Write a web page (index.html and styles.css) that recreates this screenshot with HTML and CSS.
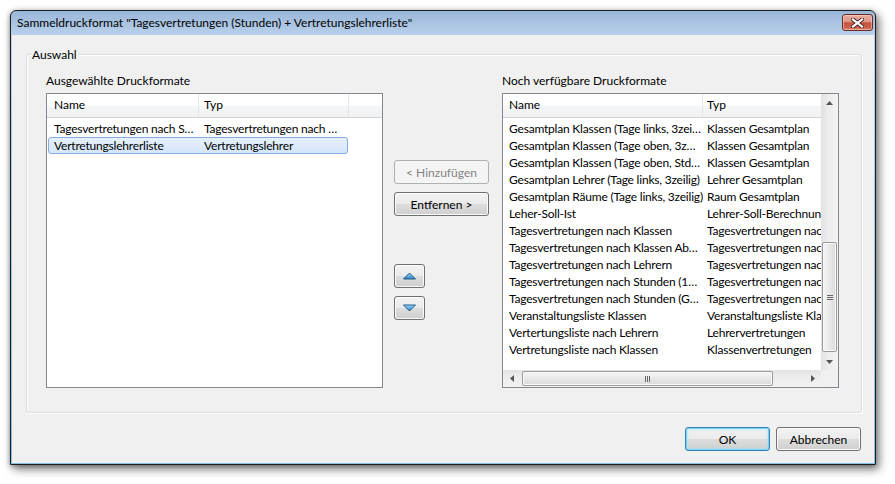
FILE: index.html
```html
<!DOCTYPE html>
<html>
<head>
<meta charset="utf-8">
<title>Sammeldruckformat</title>
<link rel="stylesheet" href="styles.css">
</head>
<body>
<div class="window">
  <div class="titlebar">
    <span class="title">Sammeldruckformat "Tagesvertretungen (Stunden) + Vertretungslehrerliste"</span>
    <div class="close">
      <svg width="13" height="10" viewBox="0 0 13 10">
        <path d="M2 1.5 L11 8.5 M11 1.5 L2 8.5" stroke="#4a2420" stroke-width="4" stroke-linecap="square" fill="none"/>
        <path d="M2 1.5 L11 8.5 M11 1.5 L2 8.5" stroke="#ffffff" stroke-width="2.2" stroke-linecap="square" fill="none"/>
      </svg>
    </div>
  </div>
  <div class="client">
    <div class="group">
      <span class="legend">Auswahl</span>
      <div class="col">
        <div class="label">Ausgewählte Druckformate</div>
        <div class="list llist">
          <div class="header">
            <div class="hcell lc1">Name</div>
            <div class="hcell lc2">Typ</div>
            <div class="hcell hrest"></div>
          </div>
          <div class="rows">
            <div class="row"><span class="cell lr1">Tagesvertretungen nach S…</span><span class="cell lr2">Tagesvertretungen nach …</span></div>
            <div class="row sel"><span class="cell lr1">Vertretungslehrerliste</span><span class="cell lr2">Vertretungslehrer</span></div>
          </div>
        </div>
      </div>
      <div class="mid">
        <button class="btn wide" disabled>&lt; Hinzufügen</button>
        <button class="btn wide gap8">Entfernen &gt;</button>
        <button class="btn small gap48">
          <svg width="13" height="8" viewBox="0 0 13 8"><defs><linearGradient id="gu" x1="0" y1="0" x2="0" y2="1"><stop offset="0" stop-color="#9fd6f7"/><stop offset="1" stop-color="#2d7fc6"/></linearGradient></defs><polygon points="0.5,7 6.5,1 12.5,7" fill="url(#gu)" stroke="#1d5a8c" stroke-width="1" stroke-linejoin="round"/></svg>
        </button>
        <button class="btn small gap8">
          <svg width="13" height="8" viewBox="0 0 13 8"><defs><linearGradient id="gd" x1="0" y1="0" x2="0" y2="1"><stop offset="0" stop-color="#9fd6f7"/><stop offset="1" stop-color="#2d7fc6"/></linearGradient></defs><polygon points="0.5,1 6.5,7 12.5,1" fill="url(#gd)" stroke="#1d5a8c" stroke-width="1" stroke-linejoin="round"/></svg>
        </button>
      </div>
      <div class="col">
        <div class="label">Noch verfügbare Druckformate</div>
        <div class="list rlist">
          <div class="content">
            <div class="header">
              <div class="hcell rc1">Name</div>
              <div class="hcell rc2">Typ</div>
            </div>
            <div class="rows">
              <div class="row"><span class="cell rr1">Gesamtplan Klassen (Tage links, 3zei…</span><span class="cell rr2">Klassen Gesamtplan</span></div>
              <div class="row"><span class="cell rr1">Gesamtplan Klassen (Tage oben, 3z…</span><span class="cell rr2">Klassen Gesamtplan</span></div>
              <div class="row"><span class="cell rr1">Gesamtplan Klassen (Tage oben, Std…</span><span class="cell rr2">Klassen Gesamtplan</span></div>
              <div class="row"><span class="cell rr1">Gesamtplan Lehrer (Tage links, 3zeilig)</span><span class="cell rr2">Lehrer Gesamtplan</span></div>
              <div class="row"><span class="cell rr1">Gesamtplan Räume (Tage links, 3zeilig)</span><span class="cell rr2">Raum Gesamtplan</span></div>
              <div class="row"><span class="cell rr1">Leher-Soll-Ist</span><span class="cell rr2">Lehrer-Soll-Berechnung</span></div>
              <div class="row"><span class="cell rr1">Tagesvertretungen nach Klassen</span><span class="cell rr2">Tagesvertretungen nach Klassen</span></div>
              <div class="row"><span class="cell rr1">Tagesvertretungen nach Klassen Ab…</span><span class="cell rr2">Tagesvertretungen nach Klassen</span></div>
              <div class="row"><span class="cell rr1">Tagesvertretungen nach Lehrern</span><span class="cell rr2">Tagesvertretungen nach Lehrern</span></div>
              <div class="row"><span class="cell rr1">Tagesvertretungen nach Stunden (1…</span><span class="cell rr2">Tagesvertretungen nach Stunden</span></div>
              <div class="row"><span class="cell rr1">Tagesvertretungen nach Stunden (G…</span><span class="cell rr2">Tagesvertretungen nach Stunden</span></div>
              <div class="row"><span class="cell rr1">Veranstaltungsliste Klassen</span><span class="cell rr2">Veranstaltungsliste Klassen</span></div>
              <div class="row"><span class="cell rr1">Vertertungsliste nach Lehrern</span><span class="cell rr2">Lehrervertretungen</span></div>
              <div class="row"><span class="cell rr1">Vertretungsliste nach Klassen</span><span class="cell rr2">Klassenvertretungen</span></div>
            </div>
          </div>
          <div class="vscroll">
            <div class="sbtn"><svg width="7" height="4" viewBox="0 0 7 4"><polygon points="0,4 3.5,0 7,4" fill="#555"/></svg></div>
            <div class="vtrack"><div class="vthumb"><span class="vgrip"></span></div></div>
            <div class="sbtn"><svg width="7" height="4" viewBox="0 0 7 4"><polygon points="0,0 3.5,4 7,0" fill="#555"/></svg></div>
          </div>
          <div class="hscroll">
            <div class="sbtn"><svg width="4" height="7" viewBox="0 0 4 7"><polygon points="4,0 0,3.5 4,7" fill="#555"/></svg></div>
            <div class="htrack"><div class="hthumb"><span class="hgrip"></span></div></div>
            <div class="sbtn"><svg width="4" height="7" viewBox="0 0 4 7"><polygon points="0,0 4,3.5 0,7" fill="#555"/></svg></div>
          </div>
          <div class="corner"></div>
        </div>
      </div>
    </div>
    <div class="footer">
      <button class="btn foot ok">OK</button>
      <button class="btn foot">Abbrechen</button>
    </div>
  </div>
</div>
</body>
</html>
```

FILE: styles.css
```css
* { box-sizing: border-box; }
html, body { margin: 0; padding: 0; background: #ffffff; }
body {
  font-family: "Segoe UI", Lato, "Liberation Sans", sans-serif;
  font-size: 12px;
  color: #000;
  width: 895px;
  height: 484px;
  overflow: hidden;
}

.window {
  margin: 10px 0 0 10px;
  width: 866px;
  height: 455px;
  border: 1px solid #1e1e1e;
  border-radius: 6px 6px 0 0;
  background: linear-gradient(to bottom, #9ab6d8 0px, #b8d0ea 24px, #7cc3e6 100%);
  box-shadow: 3px 4px 10px rgba(0,0,0,0.55), -1px 1px 4px rgba(0,0,0,0.25);
  display: flex;
  flex-direction: column;
}

.titlebar {
  flex: none;
  height: 24px;
  display: flex;
  align-items: flex-start;
  justify-content: space-between;
  padding: 0 2px 0 6px;
}
.title { margin-top: 4px; line-height: 15px; white-space: nowrap; }

.close {
  width: 31px;
  height: 17px;
  margin-top: 3px;
  border: 1px solid #6b2a22;
  border-radius: 3px;
  background: linear-gradient(to bottom, #eab0a2 0%, #dc9483 45%, #c7513c 52%, #c9644f 85%, #d98a76 100%);
  box-shadow: inset 0 0 0 1px rgba(255,220,210,0.5);
  display: flex;
  align-items: center;
  justify-content: center;
}

.client {
  flex: 1;
  margin: 0 1px 1px 1px;
  background: #f0f0f0;
  display: flex;
  flex-direction: column;
}

.group {
  position: relative;
  margin: 19px 0 0 14px;
  width: 836px;
  height: 359px;
  border: 1px solid #d5dfe5;
  border-radius: 3px;
  box-shadow: inset 1px 1px 0 #ffffff, 1px 1px 0 #ffffff;
  padding: 18px 22px 0 19px;
  display: flex;
  align-items: flex-start;
}
.legend {
  position: absolute;
  top: -8px;
  left: 4px;
  padding: 0 1px;
  line-height: 15px;
  background: #f0f0f0;
}

.col { width: 337px; display: flex; flex-direction: column; }
.label { line-height: 15px; margin-bottom: 5px; white-space: nowrap; }

.list {
  height: 295px;
  border: 1px solid #828790;
  background: #ffffff;
  overflow: hidden;
}

.header {
  height: 24px;
  display: flex;
  border-bottom: 1px solid #d5d5d5;
  background: linear-gradient(to bottom, #ffffff 0%, #ffffff 45%, #f4f5f7 55%, #f1f2f4 100%);
}
.hcell {
  flex: none;
  line-height: 22px;
  border-right: 1px solid #e3e5e8;
  white-space: nowrap;
  overflow: hidden;
}
.hrest { flex: 1; border-right: none; }
.lc1 { width: 152px; padding-left: 7px; }
.lc2 { width: 150px; padding-left: 5px; }
.rc1 { width: 200px; padding-left: 6px; }
.rc2 { width: 160px; padding-left: 4px; }

.rows { padding-top: 2px; }
.row {
  display: flex;
  height: 17px;
  margin-left: 1px;
  border: 1px solid transparent;
  border-radius: 3px;
  white-space: nowrap;
}
.llist .row { width: 300px; }
.row.sel {
  border-color: #84acdd;
  background: linear-gradient(to bottom, #e6f0fc 0%, #d5e6fb 100%);
}
.cell { flex: none; line-height: 15px; overflow: hidden; white-space: nowrap; letter-spacing: -0.2px; }
.lr1 { width: 150px; padding-left: 5px; }
.lr2 { width: 148px; padding-left: 5px; }
.rr1 { width: 198px; padding-left: 4px; }
.rr2 { width: 160px; padding-left: 4px; }

.mid {
  flex: none;
  width: 95px;
  margin: 0 13px 0 11px;
  padding-top: 87px;
  display: flex;
  flex-direction: column;
  align-items: flex-start;
}
.btn {
  height: 24px;
  padding: 0;
  font: inherit;
  color: #000;
  border: 1px solid #707070;
  border-radius: 3px;
  background: linear-gradient(to bottom, #f2f2f2 0%, #ebebeb 48%, #dddddd 52%, #cfcfcf 100%);
  box-shadow: inset 0 0 0 1px #fbfbfb;
  display: flex;
  align-items: center;
  justify-content: center;
}
.btn:disabled {
  border-color: #adb2b5;
  background: #f4f4f4;
  color: #838383;
  box-shadow: none;
}
.wide { width: 95px; }
.small { width: 31px; }
.gap8 { margin-top: 8px; }
.gap48 { margin-top: 48px; }

.rlist {
  display: grid;
  grid-template-columns: 318px 17px;
  grid-template-rows: 276px 17px;
}
.content { overflow: hidden; }

.vscroll {
  display: flex;
  flex-direction: column;
  background: linear-gradient(to right, #e2e2e2 0%, #ececec 40%, #f3f3f3 100%);
}
.sbtn {
  flex: none;
  width: 17px;
  height: 17px;
  display: flex;
  align-items: center;
  justify-content: center;
}
.vtrack { flex: 1; padding-top: 131px; }
.vthumb {
  margin-left: 1px;
  width: 15px;
  height: 110px;
  border: 1px solid #9a9a9a;
  border-radius: 2px;
  background: linear-gradient(to right, #f4f4f4 0%, #e9e9e9 50%, #d9d9d9 100%);
  box-shadow: inset 0 0 0 1px #fafafa;
  display: flex;
  align-items: center;
  justify-content: center;
}
.vgrip {
  width: 6px;
  height: 5px;
  border-top: 1px solid #666;
  border-bottom: 1px solid #666;
  background: linear-gradient(to bottom, transparent 1px, #666 1px, #666 2px, transparent 2px);
}

.hscroll {
  display: flex;
  background: linear-gradient(to bottom, #e2e2e2 0%, #ececec 40%, #f3f3f3 100%);
}
.htrack { flex: 1; padding-left: 2px; padding-top: 1px; }
.hthumb {
  width: 251px;
  height: 15px;
  border: 1px solid #9a9a9a;
  border-radius: 2px;
  background: linear-gradient(to bottom, #f4f4f4 0%, #e9e9e9 50%, #d9d9d9 100%);
  box-shadow: inset 0 0 0 1px #fafafa;
  display: flex;
  align-items: center;
  justify-content: center;
}
.hgrip {
  width: 5px;
  height: 6px;
  border-left: 1px solid #666;
  border-right: 1px solid #666;
  background: linear-gradient(to right, transparent 1px, #666 1px, #666 2px, transparent 2px);
}
.corner { background: #f0f0f0; }

.footer {
  display: flex;
  justify-content: flex-end;
  gap: 6px;
  margin-top: 14px;
  padding-right: 13px;
}
.foot { width: 85px; }
.ok {
  border-color: #3c7fb1;
  box-shadow: inset 0 0 0 1px #6fd7f8, inset 0 0 2px 2px rgba(160,230,250,0.5);
}
```
